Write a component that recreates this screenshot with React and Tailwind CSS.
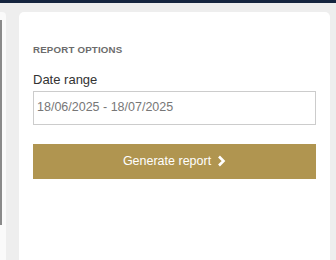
import React from 'react';

const ChevronRight = () => (
    <svg width="9" height="12" viewBox="0 0 9 12" className="ml-[6px]">
        <path d="M2 1.5 L6.5 6 L2 10.5" fill="none" stroke="white" strokeWidth="2.6" strokeLinecap="butt" strokeLinejoin="miter" />
    </svg>
);

const App = () => {
    return (
        <div className="w-[336px] h-[260px] bg-[#eeeeee] flex flex-col overflow-hidden" style={{ fontFamily: '"Liberation Sans", Arial, sans-serif' }}>
            {/* Top bar */}
            <div className="h-[3px] bg-[#15253f] shrink-0" />

            <div className="flex flex-1 pt-[9px]">
                {/* Left panel edge */}
                <div className="w-[6px] bg-[#fafafa] rounded-tr-[4px] flex flex-col pt-[8px]">
                    <div className="w-[2px] h-[205px] bg-[#8a8a8a]" />
                </div>

                {/* Main card */}
                <div className="ml-[13px] w-[311px] bg-white rounded-t-[5px] pl-[14px] pr-[14px] pt-[33px]">
                    <div className="text-[9.7px] font-bold text-[#6b6b6b] leading-none tracking-[0.2px]">REPORT OPTIONS</div>
                    <div className="mt-[18px] text-[13px] text-[#333333] leading-none">Date range</div>
                    <div className="mt-[5px] h-[34px] border border-[#cccccc] flex items-center pl-[3px] text-[12.5px] text-[#777777]">
                        18/06/2025 - 18/07/2025
                    </div>
                    <button className="mt-[19px] w-full h-[35px] bg-[#b09550] text-white text-[12.5px] flex items-center justify-center">
                        Generate report
                        <ChevronRight />
                    </button>
                </div>
            </div>
        </div>
    );
};

export default App;
